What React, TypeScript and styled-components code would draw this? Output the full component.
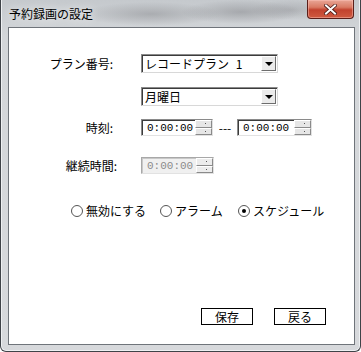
import React from 'react';
import styled, { createGlobalStyle } from 'styled-components';

const GlobalStyle = createGlobalStyle`
  html, body {
    margin: 0;
    padding: 0;
    background: #ffffff;
  }
  body {
    font-family: "Noto Sans CJK JP", "Noto Sans", sans-serif;
    font-size: 12px;
    color: #000;
  }
`;

const TimeField: React.FC<{ value: string; disabled?: boolean; width?: number }> = ({
  value,
  disabled,
  width = 72,
}) => (
  <TimeBox $disabled={disabled} $width={width}>
    <TimeText $disabled={disabled}>{value}</TimeText>
    <Spinner>
      <SpinHalf $disabled={disabled}>
        <SpinDot />
      </SpinHalf>
      <SpinHalf $disabled={disabled}>
        <SpinDot />
      </SpinHalf>
    </Spinner>
  </TimeBox>
);

const Combo: React.FC<{ value: string }> = ({ value }) => (
  <ComboBox>
    <ComboText>{value}</ComboText>
    <DropButton>
      <Arrow />
    </DropButton>
  </ComboBox>
);

const Radio: React.FC<{ label: string; checked?: boolean; width?: number }> = ({
  label,
  checked,
  width,
}) => (
  <RadioItem $width={width}>
    <RadioCircle>{checked && <RadioDot />}</RadioCircle>
    <span>{label}</span>
  </RadioItem>
);

const App: React.FC = () => (
  <>
    <GlobalStyle />
    <Window>
      <TitleBar>
        <Title>予約録画の設定</Title>
        <CloseButton>
          <svg width="13" height="11" viewBox="0 0 13 11">
            <path
              d="M2 1.5 L6.5 5.5 L11 1.5 M2 9.5 L6.5 5.5 L11 9.5"
              stroke="#4a1a16"
              strokeWidth="3.6"
              fill="none"
              strokeLinecap="square"
            />
            <path
              d="M2 1.5 L6.5 5.5 L11 1.5 M2 9.5 L6.5 5.5 L11 9.5"
              stroke="#ffffff"
              strokeWidth="2"
              fill="none"
              strokeLinecap="square"
            />
          </svg>
        </CloseButton>
      </TitleBar>
      <Content>
        <Form>
          <Row $top={26}>
            <Label>プラン番号:</Label>
            <Combo value="レコードプラン 1" />
          </Row>
          <Row $top={14}>
            <Label />
            <Combo value="月曜日" />
          </Row>
          <Row $top={13}>
            <Label>時刻:</Label>
            <TimeField value="0:00:00" />
            <Dash>---</Dash>
            <TimeField value="0:00:00" width={75} />
          </Row>
          <Row $top={21}>
            <Label $shift={4}>継続時間:</Label>
            <TimeField value="0:00:00" disabled width={73} />
          </Row>
          <RadioRow>
            <Radio label="無効にする" width={89} />
            <Radio label="アラーム" width={78} />
            <Radio label="スケジュール" checked />
          </RadioRow>
        </Form>
        <ButtonRow>
          <PushButton>保存</PushButton>
          <PushButton>戻る</PushButton>
        </ButtonRow>
      </Content>
    </Window>
  </>
);

export default App;

const Window = styled.div`
  width: 361px;
  height: 352px;
  box-sizing: border-box;
  display: flex;
  flex-direction: column;
  padding: 0 5px 6px 7px;
  border: 1px solid #3f4348;
  border-top: none;
  border-radius: 0 0 6px 6px;
  background:
    radial-gradient(ellipse 70px 12px at 150px 14px, rgba(110, 110, 115, 0.35), transparent),
    radial-gradient(ellipse 60px 12px at 240px 12px, rgba(100, 100, 105, 0.35), transparent),
    radial-gradient(ellipse 40px 10px at 290px 10px, rgba(120, 120, 125, 0.3), transparent),
    linear-gradient(180deg, #c5c9cd 0%, #d3d6d9 10%, #d7d9dc 100%);
  box-shadow: inset 1px 0 0 #eef0f2, inset -1px 0 0 #eef0f2, inset 0 -1px 0 #eef0f2;
`;

const TitleBar = styled.div`
  height: 27px;
  display: flex;
  align-items: flex-start;
`;

const Title = styled.div`
  margin: 6px 0 0 1px;
  line-height: 16px;
  font-size: 12px;
  color: #000;
  text-shadow: 0 0 8px rgba(255, 255, 255, 0.9);
`;

const CloseButton = styled.div`
  margin-left: auto;
  margin-right: 1px;
  width: 47px;
  height: 19px;
  box-sizing: border-box;
  display: flex;
  align-items: center;
  justify-content: center;
  border: 1px solid #5a1e19;
  border-top: none;
  border-radius: 0 0 4px 4px;
  background: linear-gradient(180deg, #e9a696 0%, #d97a64 40%, #c2422e 55%, #cf5a40 100%);
  box-shadow: inset 0 0 0 1px rgba(255, 200, 190, 0.45);
`;

const Content = styled.div`
  flex: 1;
  display: flex;
  flex-direction: column;
  background: #ffffff;
  border: 1px solid #6f747a;
`;

const Form = styled.div`
  display: flex;
  flex-direction: column;
`;

const Row = styled.div<{ $top: number }>`
  display: flex;
  align-items: center;
  margin-top: ${(p) => p.$top}px;
`;

const Label = styled.div<{ $shift?: number }>`
  flex: 0 0 auto;
  width: ${(p) => 104 + (p.$shift ?? 0)}px;
  margin-right: ${(p) => 28 - (p.$shift ?? 0)}px;
  box-sizing: border-box;
  text-align: right;
  line-height: 16px;
  white-space: nowrap;
`;

const ComboBox = styled.div`
  width: 137px;
  height: 19px;
  box-sizing: border-box;
  display: flex;
  align-items: center;
  background: #fff;
  border-top: 1px solid #8a8a8a;
  border-left: 1px solid #8a8a8a;
  border-right: 1px solid #d8d8d8;
  border-bottom: 1px solid #d8d8d8;
  box-shadow: inset 1px 1px 0 #3c3c3c;
`;

const ComboText = styled.div`
  flex: 1;
  padding-left: 3px;
  line-height: 16px;
  white-space: pre;
  word-spacing: 4px;
`;

const DropButton = styled.div`
  width: 15px;
  height: 15px;
  margin-right: 1px;
  box-sizing: border-box;
  display: flex;
  align-items: center;
  justify-content: center;
  background: #ebebeb;
  border-top: 1px solid #ffffff;
  border-left: 1px solid #ffffff;
  border-right: 1px solid #6d6d6d;
  border-bottom: 1px solid #6d6d6d;
`;

const Arrow = styled.div`
  width: 0;
  height: 0;
  border-left: 4px solid transparent;
  border-right: 4px solid transparent;
  border-top: 4px solid #000;
  margin-top: 1px;
`;

const TimeBox = styled.div<{ $disabled?: boolean; $width: number }>`
  flex: 0 0 auto;
  width: ${(p) => p.$width}px;
  height: 17px;
  box-sizing: border-box;
  display: flex;
  align-items: center;
  background: ${(p) => (p.$disabled ? '#f0f0f0' : '#ffffff')};
  border-top: 1px solid ${(p) => (p.$disabled ? '#a8a8a8' : '#8a8a8a')};
  border-left: 1px solid ${(p) => (p.$disabled ? '#a8a8a8' : '#8a8a8a')};
  border-right: 1px solid #e2e2e2;
  border-bottom: 1px solid #e2e2e2;
  box-shadow: inset 1px 1px 0 ${(p) => (p.$disabled ? '#c8c8c8' : '#3c3c3c')};
`;

const TimeText = styled.div<{ $disabled?: boolean }>`
  flex: 1;
  padding-left: 5px;
  font-family: "Liberation Mono", "DejaVu Sans Mono", monospace;
  font-size: 11px;
  line-height: 14px;
  color: ${(p) => (p.$disabled ? '#8c8c8c' : '#000')};
`;

const Spinner = styled.div`
  width: 17px;
  height: 15px;
  display: flex;
  flex-direction: column;
`;

const SpinHalf = styled.div<{ $disabled?: boolean }>`
  flex: 1;
  box-sizing: border-box;
  display: flex;
  align-items: center;
  justify-content: center;
  background: ${(p) => (p.$disabled ? '#ececec' : '#e6e6e6')};
  border-top: 1px solid #ffffff;
  border-left: 1px solid #ffffff;
  border-bottom: 1px solid #8a8a8a;
  border-right: 1px solid #8a8a8a;
`;

const SpinDot = styled.div`
  width: 1px;
  height: 1px;
  background: #555;
  margin-left: 3px;
`;

const Dash = styled.div`
  width: 24px;
  text-align: center;
  line-height: 14px;
`;

const RadioRow = styled.div`
  display: flex;
  align-items: center;
  margin-top: 30px;
  padding-left: 62px;
  height: 14px;
`;

const RadioItem = styled.div<{ $width?: number }>`
  width: ${(p) => (p.$width ? `${p.$width}px` : 'auto')};
  display: flex;
  align-items: center;
  gap: 3px;
  white-space: nowrap;
  line-height: 14px;
`;

const RadioCircle = styled.div`
  width: 12px;
  height: 12px;
  box-sizing: border-box;
  border: 1px solid #555;
  border-radius: 50%;
  background: #fff;
  display: flex;
  align-items: center;
  justify-content: center;
  flex-shrink: 0;
`;

const RadioDot = styled.div`
  width: 4px;
  height: 4px;
  border-radius: 50%;
  background: #000;
`;

const ButtonRow = styled.div`
  margin-top: auto;
  display: flex;
  justify-content: flex-end;
  gap: 21px;
  padding: 0 28px 19px 0;
`;

const PushButton = styled.div`
  width: 52px;
  height: 17px;
  box-sizing: border-box;
  border: 1px solid #000;
  background: #fff;
  display: flex;
  align-items: center;
  justify-content: center;
  line-height: 14px;
`;
